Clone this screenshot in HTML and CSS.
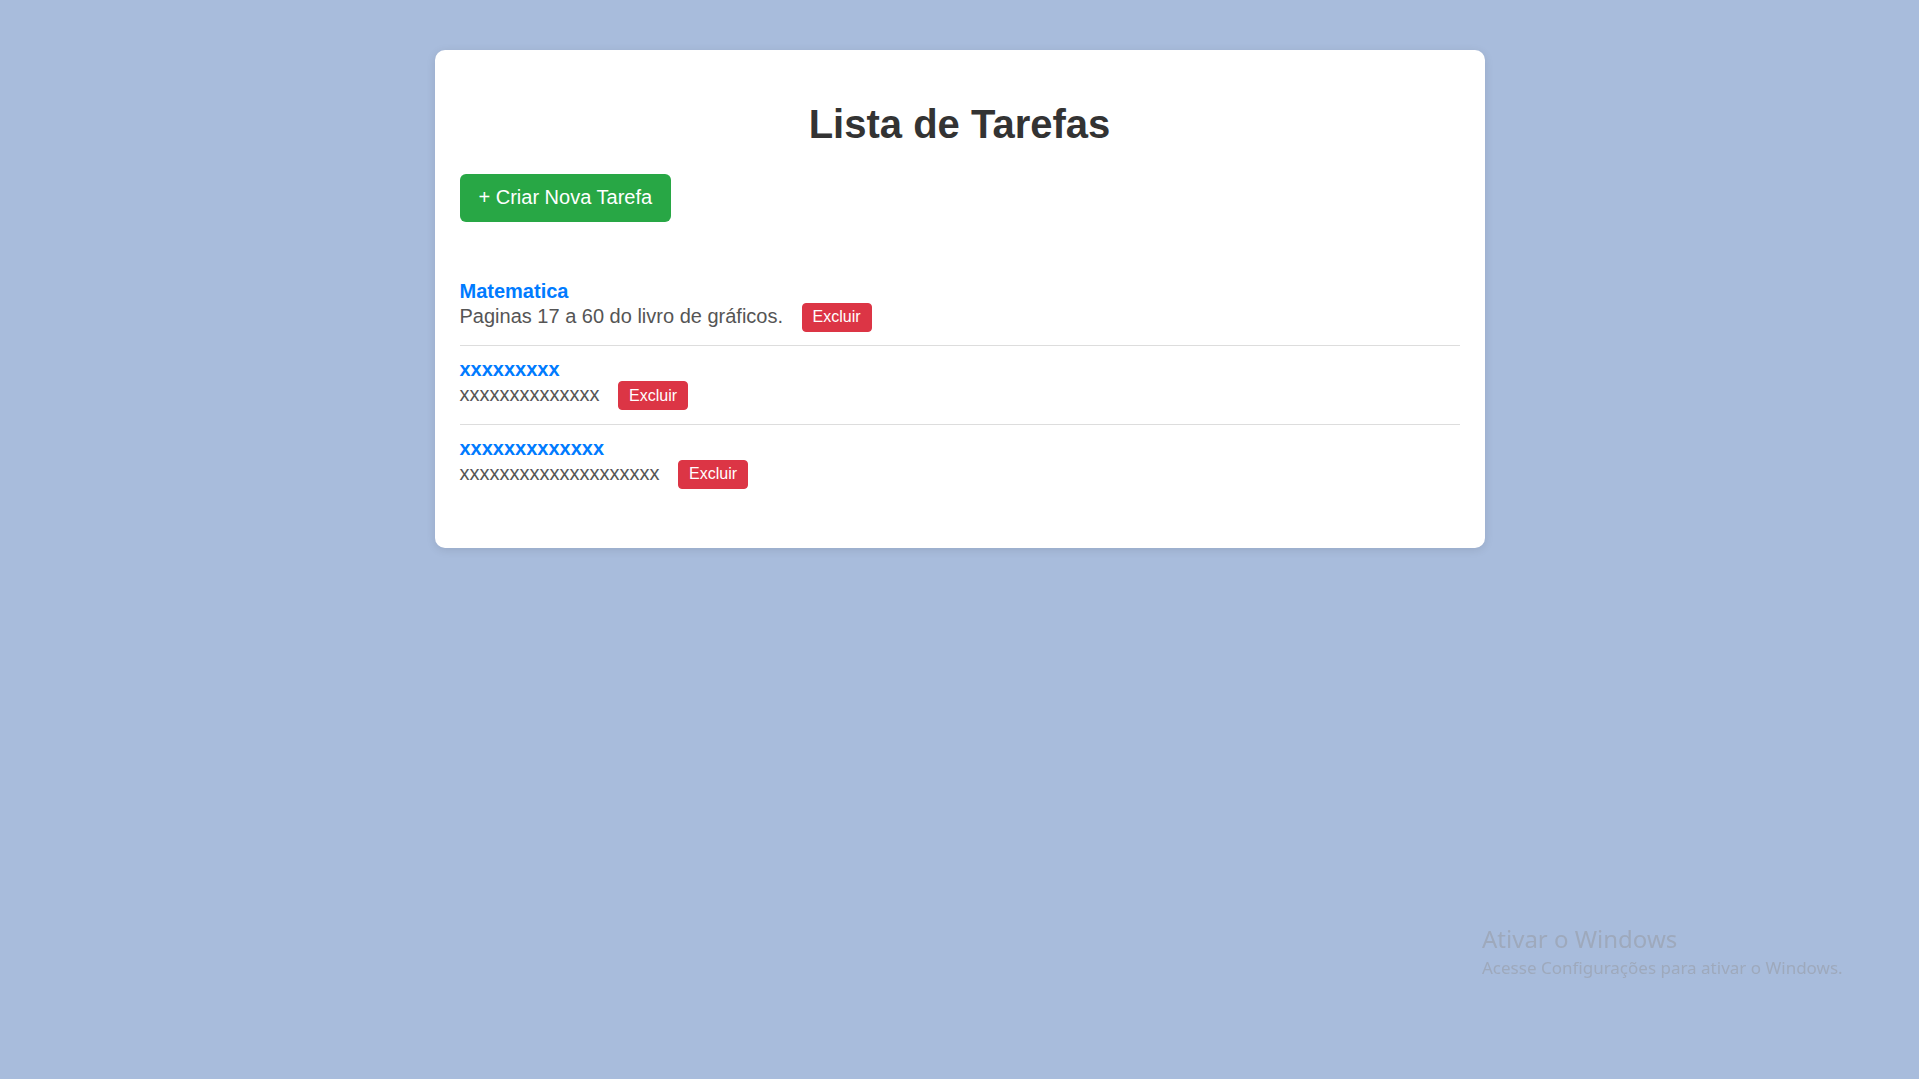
FILE: index.html
```html
<!DOCTYPE html>
<html lang="pt-BR">
<head>
<meta charset="UTF-8">
<title>Lista de Tarefas</title>
<link rel="stylesheet" href="styles.css">
</head>
<body>
<div class="container">
  <h1 class="title">Lista de Tarefas</h1>
  <button class="btn-create">+ Criar Nova Tarefa</button>
  <ul class="task-list">
    <li class="task">
      <div class="task-title">Matematica</div>
      <div class="task-desc">Paginas 17 a 60 do livro de gráficos. <button class="btn-delete">Excluir</button></div>
    </li>
    <li class="task">
      <div class="task-title">xxxxxxxxx</div>
      <div class="task-desc">xxxxxxxxxxxxxx <button class="btn-delete">Excluir</button></div>
    </li>
    <li class="task">
      <div class="task-title">xxxxxxxxxxxxx</div>
      <div class="task-desc">xxxxxxxxxxxxxxxxxxxx <button class="btn-delete">Excluir</button></div>
    </li>
  </ul>
</div>
<div class="watermark">
  <div class="wm-title">Ativar o Windows</div>
  <div class="wm-sub">Acesse Configurações para ativar o Windows.</div>
</div>
</body>
</html>
```
FILE: styles.css
```css
html, body {
  margin: 0;
  padding: 0;
}
body {
  background: #a8bcdc;
  font-family: "Liberation Sans", Arial, sans-serif;
  color: #333;
  min-height: 1079px;
}
.container {
  width: 1000px;
  margin: 50px auto 0;
  padding: 25px;
  background: #fff;
  border-radius: 10px;
  box-shadow: 0 2px 10px rgba(0, 0, 0, 0.1);
}
.title {
  font-size: 40px;
  font-weight: bold;
  text-align: center;
  color: #333;
  margin: 26.8px 0;
}
.btn-create {
  display: inline-block;
  background: #28a745;
  color: #fff;
  border: none;
  border-radius: 6px;
  padding: 12.5px 19px;
  font-family: "Liberation Sans", Arial, sans-serif;
  font-size: 20px;
  line-height: 23px;
  cursor: pointer;
}
.task-list {
  list-style: none;
  padding: 0;
  margin: 46px 0 21px;
}
.task {
  padding: 12px 0 13.5px;
  border-bottom: 1px solid #ddd;
}
.task:last-child {
  border-bottom: none;
}
.task-title {
  font-size: 20px;
  font-weight: bold;
  color: #007bff;
  line-height: 23px;
}
.task-desc {
  font-size: 20px;
  color: #555;
}
.btn-delete {
  display: inline-block;
  margin-left: 13px;
  background: #dc3545;
  color: #fff;
  border: 1px solid #dc3545;
  border-radius: 4px;
  padding: 4.5px 10px;
  font-family: "Liberation Sans", Arial, sans-serif;
  font-size: 16px;
  vertical-align: baseline;
}
.watermark {
  position: fixed;
  left: 1482px;
  top: 924px;
  color: #9ea9bc;
  font-family: "Noto Sans", "Open Sans", sans-serif;
}
.wm-title {
  font-size: 24px;
  line-height: 30px;
}
.wm-sub {
  font-size: 17px;
  line-height: 28px;
}
```
